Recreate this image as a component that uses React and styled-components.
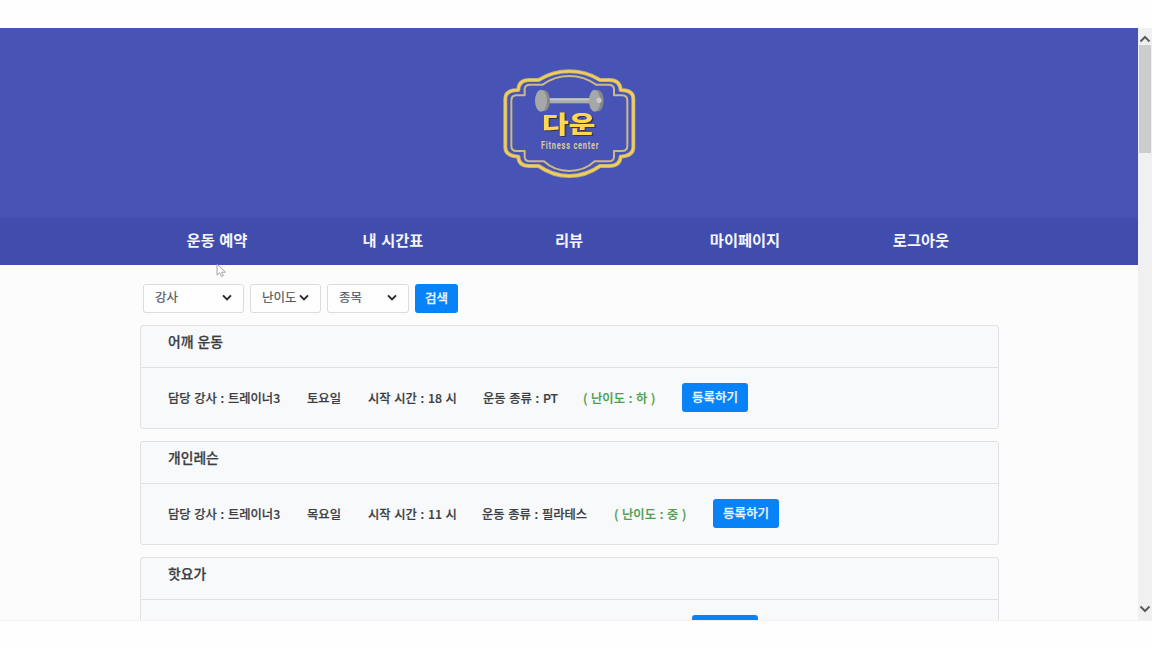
import React from "react";
import styled, { createGlobalStyle } from "styled-components";

const GlobalStyle = createGlobalStyle`
  * { box-sizing: border-box; }
  html, body { margin: 0; }
  body {
    background: #fefefe;
    overflow: hidden;
    font-family: "Noto Sans CJK KR", sans-serif;
    color: #3b3e42;
  }
`;

const Stage = styled.div`
  height: 648px;
  padding: 28px 0;
`;

const Viewport = styled.div`
  display: flex;
  height: 593px;
  overflow: hidden;
  background: #fcfcfd;
  border-bottom: 1px solid #f1f1f3;
`;

const Page = styled.div`
  width: 1138px;
  flex: none;
`;

const Header = styled.header`
  height: 189px;
  padding-top: 32px;
  display: flex;
  justify-content: center;
  background: #4853b6;
`;

const Nav = styled.nav`
  height: 48px;
  padding: 0 129px;
  display: grid;
  grid-template-columns: repeat(5, 1fr);
  background: #414dad;
  border-top: 1px solid #454fb1;
`;

const NavLink = styled.a`
  padding-bottom: 6px;
  display: flex;
  align-items: center;
  justify-content: center;
  color: #f5f6fc;
  font-size: 15.3px;
  font-weight: 600;
  word-spacing: 1px;
  white-space: nowrap;
`;

const Main = styled.main`
  padding: 19px 139px 0 140px;
`;

const Filters = styled.div`
  display: flex;
  gap: 6px;
  padding-left: 3px;
  margin-bottom: 12px;
`;

const Select = styled.div`
  width: ${(p) => p.$width}px;
  height: 29px;
  padding: 0 11px 2px;
  display: flex;
  align-items: center;
  justify-content: space-between;
  background: #fefefe;
  border: 1px solid #d9dce0;
  border-radius: 3px;
  color: #55595e;
  font-size: 12.5px;
  line-height: 16px;
  -webkit-text-stroke: 0.2px;
  white-space: nowrap;
`;

const SelectLabel = styled.span`
  padding-bottom: 2px;
`;

const Button = styled.button`
  width: ${(p) => p.$width}px;
  height: 29px;
  flex: none;
  padding: 0 0 3px;
  border: 0;
  border-radius: 3px;
  background: #0883f7;
  color: #eaf5ff;
  font: 500 12.5px "Noto Sans CJK KR", sans-serif;
  -webkit-text-stroke: 0.25px;
  white-space: nowrap;
`;

const Card = styled.section`
  height: 104px;
  margin-bottom: 12px;
  border: 1px solid #dfe1e4;
  border-radius: 3px;
  background: #f8f9fb;
`;

const CardTitle = styled.h2`
  height: 42px;
  margin: 0;
  padding: 0 27px 11px;
  display: flex;
  align-items: center;
  border-bottom: 1px solid #dfe1e4;
  font-size: 13.8px;
  font-weight: 500;
  word-spacing: 1px;
  -webkit-text-stroke: 0.25px;
`;

const CardBody = styled.div`
  height: 60px;
  padding: 0 27px 1px;
  display: flex;
  align-items: center;
`;

const Field = styled.span`
  width: ${(p) => p.$width}px;
  flex: none;
  padding-top: 1px;
  font-size: 12.3px;
  font-weight: 500;
  word-spacing: 0.9px;
  -webkit-text-stroke: 0.2px;
  white-space: nowrap;
`;

const Level = styled(Field)`
  color: #4b9f4d;
`;

const ButtonSlot = styled.div`
  margin-left: ${(p) => p.$offset}px;
  display: flex;
`;

const ScrollTrack = styled.div`
  width: 14px;
  flex: none;
  display: flex;
  flex-direction: column;
  align-items: center;
  justify-content: space-between;
  padding: 7px 0 7px;
  background: #f0f0f0;
`;

const ScrollTop = styled.div`
  width: 100%;
  display: flex;
  flex-direction: column;
  align-items: center;
  gap: 2px;
`;

const ScrollThumb = styled.div`
  width: 12px;
  height: 108px;
  background: #cdcdcd;
`;

const Pointer = styled.svg`
  position: absolute;
  left: 216px;
  top: 263px;
`;

const LogoName = styled.text`
  font-family: "Noto Sans CJK KR", sans-serif;
  font-size: 72px;
  font-weight: 900;
  fill: #ffd84e;
  filter: drop-shadow(4px 3px 0 #35364c);
`;

const Chevron = () => (
  <svg width="10" height="7" viewBox="0 0 10 7" fill="none">
    <path d="M1 1.4 5 5.4 9 1.4" stroke="#25282c" strokeWidth="1.9" />
  </svg>
);

const ScrollArrow = ({ up }) => (
  <svg width="12" height="8" viewBox="0 0 12 8" fill="none">
    <path d={up ? "M1.5 6.5 6 2 10.5 6.5" : "M1.5 1.5 6 6 10.5 1.5"} stroke="#5c5c5c" strokeWidth="2" />
  </svg>
);

const outerFrame =
  "M87 90 Q88 60 120 60 L148 60 Q190 34 240 34 Q290 34 332 60 L360 60 Q392 60 394 90 Q432 90 432 116 L432 262 Q432 288 394 290 Q392 318 360 318 L332 318 Q290 348 240 348 Q190 348 148 318 L120 318 Q88 318 87 290 Q48 288 48 262 L48 116 Q48 90 87 90 Z";
const innerFrame =
  "M106 106 L106 86 Q108 74 122 74 L160 74 Q196 48 240 48 Q284 48 320 74 L358 74 Q372 74 374 86 L374 106 L398 106 Q414 106 414 122 L414 258 Q414 273 398 273 L374 273 L374 292 Q372 304 358 304 L316 304 Q286 333 240 333 Q194 333 164 304 L122 304 Q108 304 106 292 L106 273 L82 273 Q66 273 66 258 L66 122 Q66 106 82 106 Z";

const Logo = () => (
  <svg width="160" height="125" viewBox="0 0 480 375">
    <g transform="translate(1 0)" fill="none" strokeLinejoin="round">
      <path d={outerFrame} stroke="#b9aa7c" strokeWidth="12" />
      <path d={outerFrame} stroke="#f2cf58" strokeWidth="7" />
      <path d={innerFrame} stroke="#cbb987" strokeWidth="6" />
    </g>
    <g transform="translate(2 0)">
      <rect x="168" y="114" width="140" height="16" fill="#a9abb5" />
      <rect x="168" y="116" width="140" height="5" fill="#c5c7cc" />
      <ellipse cx="163" cy="122" rx="18" ry="32" fill="#85878b" />
      <ellipse cx="154" cy="122" rx="18" ry="33" fill="#a5a7a8" />
      <ellipse cx="325" cy="122" rx="17" ry="32" fill="#85878b" />
      <ellipse cx="315" cy="122" rx="17" ry="33" fill="#a5a7a8" />
      <circle cx="328" cy="121" r="8" fill="#c9cacb" />
    </g>
    <LogoName x="159" y="219" textLength="160" lengthAdjust="spacingAndGlyphs">다운</LogoName>
    <text
      transform="translate(156 266) scale(.72 1)"
      textLength="240"
      fontFamily='"Roboto", sans-serif'
      fontSize="31"
      fontWeight="700"
      fill="#dccb92"
    >
      Fitness center
    </text>
  </svg>
);

const menu = ["운동 예약", "내 시간표", "리뷰", "마이페이지", "로그아웃"];

const filters = [
  { label: "강사", width: 101 },
  { label: "난이도", width: 71 },
  { label: "종목", width: 82 },
];

const classes = [
  {
    title: "어깨 운동",
    fields: [["담당 강사 : 트레이너3", 139], ["토요일", 61], ["시작 시간 : 18 시", 115], ["운동 종류 : PT", 100]],
    level: "( 난이도 : 하 )",
    offset: 0,
  },
  {
    title: "개인레슨",
    fields: [["담당 강사 : 트레이너3", 139], ["목요일", 61], ["시작 시간 : 11 시", 114], ["운동 종류 : 필라테스", 132]],
    level: "( 난이도 : 중 )",
    offset: 0,
  },
  { title: "핫요가", fields: [], offset: 524 },
];

export default function App() {
  return (
    <Stage>
      <GlobalStyle />
      <Viewport>
        <Page>
          <Header>
            <Logo />
          </Header>
          <Nav>
            {menu.map((item) => (
              <NavLink key={item}>{item}</NavLink>
            ))}
          </Nav>
          <Main>
            <Filters>
              {filters.map((f) => (
                <Select key={f.label} $width={f.width}>
                  <SelectLabel>{f.label}</SelectLabel>
                  <Chevron />
                </Select>
              ))}
              <Button $width={43}>검색</Button>
            </Filters>
            {classes.map((c) => (
              <Card key={c.title}>
                <CardTitle>{c.title}</CardTitle>
                <CardBody>
                  {c.fields.map(([text, width]) => (
                    <Field key={text} $width={width}>{text}</Field>
                  ))}
                  {c.level && <Level $width={99}>{c.level}</Level>}
                  <ButtonSlot $offset={c.offset}>
                    <Button $width={66}>{c.level ? "등록하기" : null}</Button>
                  </ButtonSlot>
                </CardBody>
              </Card>
            ))}
          </Main>
        </Page>
        <ScrollTrack>
          <ScrollTop>
            <ScrollArrow up />
            <ScrollThumb />
          </ScrollTop>
          <ScrollArrow />
        </ScrollTrack>
      </Viewport>
      <Pointer width="11" height="15" viewBox="0 0 11 15">
        <path d="M1 1V12L3.7 9.6 5.5 13.5 7.3 12.7 5.7 9.2H9.5Z" fill="#fff" stroke="#8e8e96" strokeWidth=".8" />
      </Pointer>
    </Stage>
  );
}
